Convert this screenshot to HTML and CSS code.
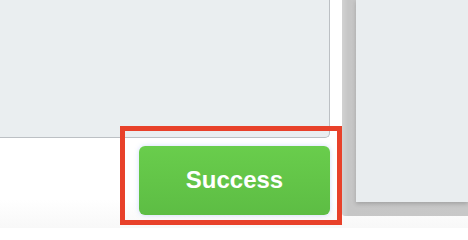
FILE: index.html
```html
<!DOCTYPE html>
<html>
<head>
<meta charset="utf-8">
<link rel="stylesheet" href="styles.css">
</head>
<body>
<div class="page">
  <div class="left">
    <div class="panel"></div>
    <div class="actions">
      <button class="btn-success">Success</button>
    </div>
  </div>
  <div class="right">
    <div class="sheet"></div>
  </div>
  <div class="highlight"></div>
</div>
</body>
</html>
```
FILE: styles.css
```css
html, body {
  margin: 0;
  padding: 0;
}
body {
  width: 468px;
  height: 228px;
  overflow: hidden;
  background: linear-gradient(to bottom, #ffffff 0, #ffffff 200px, #f8f8f8 228px);
  font-family: "Liberation Sans", Arial, Helvetica, sans-serif;
}
.page {
  position: relative;
  display: grid;
  grid-template-columns: 342px 126px;
  height: 228px;
}
.left {
  display: flex;
  flex-direction: column;
}
.panel {
  width: 329px;
  height: 137px;
  background: #eaeef0;
  border-right: 1px solid #bcc0c4;
  border-bottom: 1px solid #bcc0c4;
  border-bottom-right-radius: 5px;
}
.actions {
  display: flex;
  padding: 8px 0 0 139px;
}
.btn-success {
  width: 191px;
  height: 69px;
  border: none;
  border-radius: 6px;
  background: linear-gradient(to bottom, #69cd4c, #5dbd44);
  color: #ffffff;
  font-family: "Liberation Sans", Arial, Helvetica, sans-serif;
  font-weight: bold;
  font-size: 24px;
  padding: 0 0 1px 0;
  box-shadow: 0 0 5px rgba(120, 160, 255, 0.35);
}
.right {
  height: 216px;
  background: linear-gradient(to right, #d2d2d2 0, #c6c6c6 6px, #c8c8c8 100%);
  border-bottom-left-radius: 3px;
  display: flex;
  padding-left: 14px;
}
.sheet {
  flex: 1;
  height: 202px;
  background: #e9edef;
  box-shadow: 0 2px 4px rgba(0, 0, 0, 0.18);
}
.highlight {
  position: absolute;
  left: 120px;
  top: 126px;
  width: 212px;
  height: 89px;
  border: 5px solid #e8412a;
}
```
